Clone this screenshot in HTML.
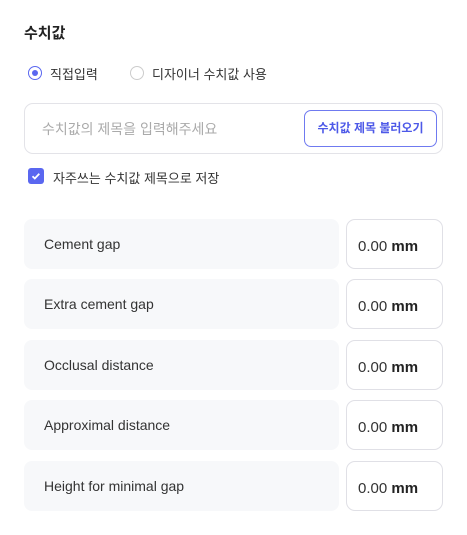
<!DOCTYPE html>
<html><head><meta charset="utf-8"><style>
body{margin:0;width:467px;height:535px;background:#fff;font-family:"Liberation Sans","Noto Sans CJK KR",sans-serif;position:relative;overflow:hidden;color:#222}
.a{position:absolute}
.t{left:24px;top:22px;font-size:15px;font-weight:bold;color:#222}
.r{width:12px;height:12px;border-radius:50%;border:1px solid #ccc;background:#fff}
.lbl{font-size:13px;color:#333}
.box{left:24px;top:103px;width:417px;height:49px;border:1px solid #e3e3e8;border-radius:9px}
.btn{left:304px;top:110px;width:131px;height:35px;border:1px solid #6f7af0;border-radius:7px;color:#4d59e8;font-size:12px;font-weight:bold;text-align:center;line-height:35px}
.row{left:24px;width:315px;height:50px;background:#f7f8fa;border-radius:8px;font-size:14px;color:#333;line-height:50px;text-indent:20px}
.val{left:346px;width:95px;height:48px;border:1px solid #e0e0e6;border-radius:9px;font-size:15px;color:#333;line-height:53px;text-indent:11px}
.val b{color:#222}
</style></head><body>
<div class="a t">수치값</div>
<div class="a r" style="left:28px;top:66px;border-color:#5a67f0"><div class="a" style="left:3px;top:3px;width:6px;height:6px;border-radius:50%;background:#5a67f0"></div></div>
<div class="a lbl" style="left:50px;top:64px">직접입력</div>
<div class="a r" style="left:130px;top:66px"></div>
<div class="a lbl" style="left:152px;top:64px">디자이너 수치값 사용</div>
<div class="a box"></div>
<div class="a" style="left:42px;top:119px;font-size:14px;color:#aaa">수치값의 제목을 입력해주세요</div>
<div class="a btn">수치값 제목 불러오기</div>
<div class="a" style="left:28px;top:168px;width:16px;height:16px;border-radius:3px;background:#5a67f0"><svg width="16" height="16"><path d="M4.5 8.2l2.3 2.3 4.5-4.8" stroke="#fff" stroke-width="1.8" fill="none"/></svg></div>
<div class="a lbl" style="left:53px;top:168px">자주쓰는 수치값 제목으로 저장</div>
<div class="a row" style="top:219px">Cement gap</div><div class="a val" style="top:219px">0.00 <b>mm</b></div>
<div class="a row" style="top:279px">Extra cement gap</div><div class="a val" style="top:279px">0.00 <b>mm</b></div>
<div class="a row" style="top:340px">Occlusal distance</div><div class="a val" style="top:340px">0.00 <b>mm</b></div>
<div class="a row" style="top:400px">Approximal distance</div><div class="a val" style="top:400px">0.00 <b>mm</b></div>
<div class="a row" style="top:461px">Height for minimal gap</div><div class="a val" style="top:461px">0.00 <b>mm</b></div>
</body></html>
